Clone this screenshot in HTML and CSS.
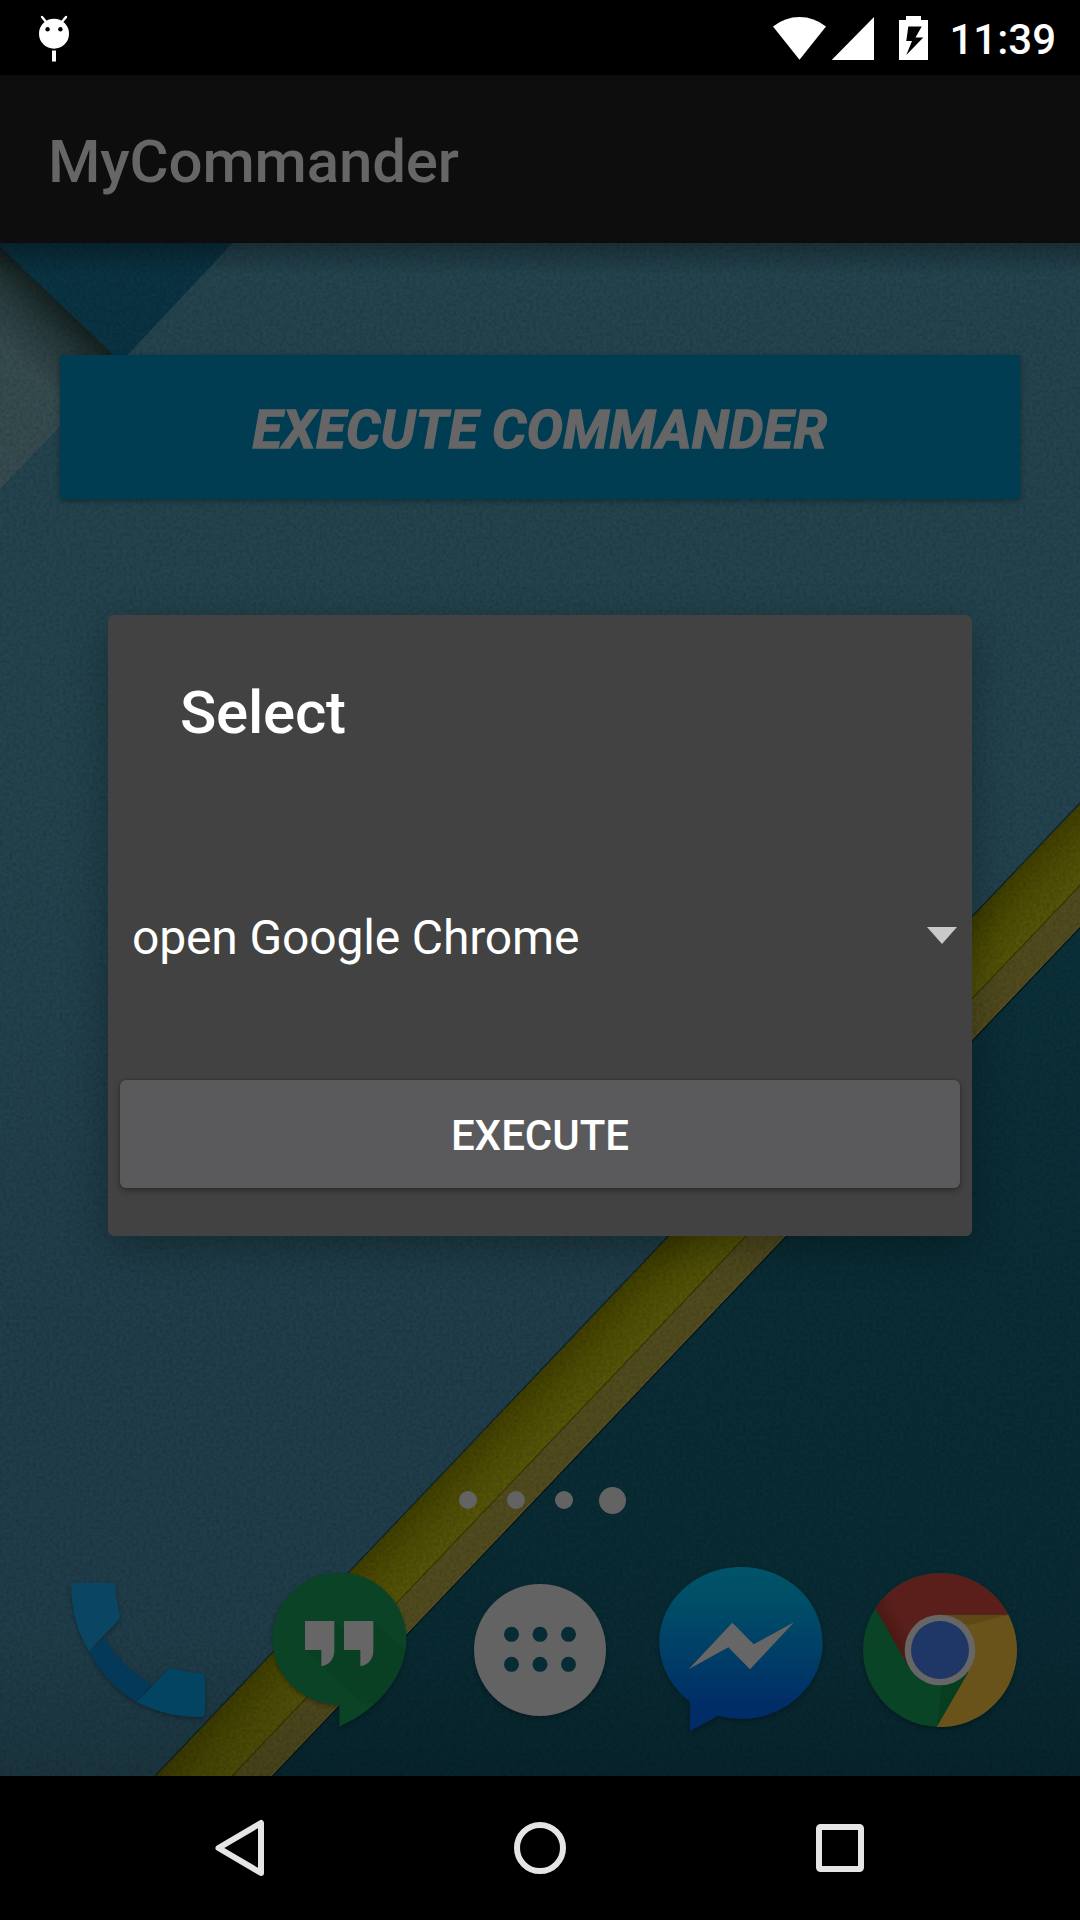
FILE: index.html
```html
<!DOCTYPE html>
<html lang="en">
<head>
<meta charset="utf-8">
<title>MyCommander</title>
<link rel="stylesheet" href="styles.css">
</head>
<body>
<div class="screen">
  <header class="status-bar">
    <svg class="status-debug" width="34" height="50" viewBox="37 13 34 50">
      <path d="M42 17l5 6M66 17l-5 6" stroke="#fff" stroke-width="2.4" stroke-linecap="round"/>
      <circle cx="54" cy="33.7" r="15" fill="#fff"/>
      <circle cx="47.6" cy="29.3" r="2.2"/>
      <circle cx="60.4" cy="29.3" r="2.2"/>
      <path d="M52 50.5h4v11h-4z" fill="#fff"/>
    </svg>
    <div class="status-right">
      <svg width="101" height="46" viewBox="773 14 101 46" fill="#fff">
        <path d="M773 25.5Q785 16 799.5 16T826 25.5L799.5 58.7z"/>
        <path d="M874 16v43h-42.3z"/>
      </svg>
      <svg width="29" height="46" viewBox="899 14 29 46">
        <path d="M906 15h15v4h7v40h-29V19h7z" fill="#fff"/>
        <path d="M921.7 25.5h-13.4l-2 14.5h5.7l-5.7 14 17-17.5h-7.8z"/>
      </svg>
      <span class="clock">11:39</span>
    </div>
  </header>

  <div class="app-bar"><h1 class="app-title">MyCommander</h1></div>

  <main class="home">
    <svg class="wallpaper" viewBox="0 243 1080 1533" width="1080" height="1533">
      <defs>
        <linearGradient id="light" x1="0" y1="243" x2="0" y2="1776" gradientUnits="userSpaceOnUse">
          <stop offset="0" stop-color="#24444f"/><stop offset=".35" stop-color="#23444f"/><stop offset=".7" stop-color="#203e4b"/><stop offset="1" stop-color="#1f3d49"/>
        </linearGradient>
        <linearGradient id="deep" x1="0" y1="930" x2="0" y2="1776" gradientUnits="userSpaceOnUse">
          <stop offset="0" stop-color="#0b303a"/><stop offset="1" stop-color="#082932"/>
        </linearGradient>
        <linearGradient id="band" x1="618" y1="1290" x2="658" y2="1328" gradientUnits="userSpaceOnUse">
          <stop offset="0" stop-color="#403f00"/><stop offset=".5" stop-color="#4e4d04"/><stop offset="1" stop-color="#565509"/>
        </linearGradient>
        <linearGradient id="cream" x1="58" y1="302" x2="10" y2="352" gradientUnits="userSpaceOnUse">
          <stop offset="0" stop-color="#142220"/><stop offset=".4" stop-color="#26383a"/><stop offset="1" stop-color="#364c50"/>
        </linearGradient>
        <linearGradient id="top" x1="0" y1="243" x2="0" y2="275" gradientUnits="userSpaceOnUse">
          <stop offset="0" stop-color="#000" stop-opacity=".3"/><stop offset="1" stop-color="#000" stop-opacity="0"/>
        </linearGradient>
        <linearGradient id="bottom" x1="0" y1="1640" x2="0" y2="1776" gradientUnits="userSpaceOnUse">
          <stop offset="0" stop-color="#000" stop-opacity="0"/><stop offset="1" stop-color="#000" stop-opacity=".14"/>
        </linearGradient>
        <filter id="grain" x="0" y="0" width="100%" height="100%">
          <feTurbulence type="fractalNoise" baseFrequency=".3" numOctaves="2" seed="4"/>
          <feColorMatrix values="0 0 0 0 0  0 0 0 0 0  0 0 0 0 0  .28 0 0 0 -.09"/>
        </filter>
      </defs>
      <path fill="url(#light)" d="M0 243h1080v1533H0z"/>
      <path fill="url(#cream)" d="M0 243v246L121 362z"/>
      <path fill="#0a3343" d="M-4 243h236.5L121 362z"/>
      <path fill="url(#deep)" d="M1080 926.7V1776H271.7z"/>
      <path fill="#514c1e" d="M1080 885.3v41.4L271.7 1776H232z"/>
      <path fill="url(#band)" d="M1080 803v82.3L232 1776h-77z"/>
      <path d="M1080 803L155 1776" stroke="#102329" stroke-width="1.3"/>
      <path d="M1080 885.3L232 1776" stroke="#393800" stroke-width="1.2"/>
      <path d="M1080 926L271 1776" stroke="#665725" stroke-width="1"/>
      <path d="M1080 927.7L272.7 1776" stroke="#051820" stroke-width="1.3"/>
      <path fill="url(#top)" d="M0 243h1080v32H0z"/>
      <path fill="url(#bottom)" d="M0 1640h1080v136H0z"/>
      <path filter="url(#grain)" d="M0 243h1080v1533H0z"/>
    </svg>

    <button class="commander-button">EXECUTE COMMANDER</button>

    <section class="dialog">
      <h2 class="dialog-title">Select</h2>
      <div class="spinner">
        <span>open Google Chrome</span>
        <svg width="30" height="17" viewBox="0 0 30 17"><path d="M0 0h30L15 17z" fill="#c9c9c9"/></svg>
      </div>
      <button class="dialog-button">EXECUTE</button>
    </section>

    <div class="pages"><i></i><i></i><i></i><i class="current"></i></div>

    <nav class="dock">
      <svg viewBox="0 0 600 600">
        <path fill="#05395a" d="M147 334L195 293Q243 385 335 431L290 486Q200 436 147 334z"/>
        <path fill="#0a4664" d="M106 128H213Q226 128 227 142Q229 190 240 225Q242 233 236 240L147 334Q94 246 94 142Q94 128 106 128z"/>
        <path fill="#034463" d="M290 486L383 389Q389 383 398 385Q438 397 484 399Q495 400 495 411V519Q495 530 484 531Q382 533 290 486z"/>
      </svg>
      <svg viewBox="600 0 600 600">
        <path fill="#0a4325" d="M898 98A200.500 198 0 0 0 697 296A200.500 198 0 0 0 898 494V560C1010 512 1099 410 1099 298A201 200 0 0 0 898 98z"/>
        <path fill="#083c20" d="M883 243L912 272V243H1000L1098 330Q1086 410 1008 489L970 492 795 330 883 290z" opacity=".4"/>
        <path fill="#666" d="M795 243H883V330Q883 370 844 379V330H795zM912 243H1000V330Q1000 370 961 379V330H912z"/>
      </svg>
      <svg viewBox="120 240 600 600">
        <circle cx="420" cy="570" r="198" fill="#636363"/>
        <g fill="#082c36">
          <circle cx="334.500" cy="523" r="22.500"/><circle cx="420" cy="523" r="22.500"/><circle cx="505.500" cy="523" r="22.500"/>
          <circle cx="334.500" cy="613" r="22.500"/><circle cx="420" cy="613" r="22.500"/><circle cx="505.500" cy="613" r="22.500"/>
        </g>
      </svg>
      <svg viewBox="0 0 600 600">
        <defs><linearGradient id="msg" x1="0" y1="0" x2="0" y2="1"><stop offset="0" stop-color="#005468"/><stop offset=".15" stop-color="#005068"/><stop offset=".5" stop-color="#004067"/><stop offset=".85" stop-color="#002d67"/><stop offset="1" stop-color="#002b67"/></linearGradient></defs>
        <path fill="url(#msg)" d="M303 81C168 81 58 182 58 308C58 378 94 441 150 485V573L235 527Q268 537 303 537C438 537 548 434 548 308S438 81 303 81z"/>
        <path fill="#666" d="M146 388L277 248 341 313 462 247 330 388 265 322z"/>
      </svg>
      <svg viewBox="600 0 600 600">
        <defs><linearGradient id="redshade" x1="750" y1="290" x2="800" y2="262" gradientUnits="userSpaceOnUse"><stop offset="0" stop-color="#4a1814"/><stop offset="1" stop-color="#5a1f1a"/></linearGradient></defs>
        <circle cx="900" cy="330" r="231" fill="#084425"/>
        <path fill="#69531b" d="M900 224H1105A231 231 0 0 1 890 561L985 396z"/>
        <path fill="#5f4717" d="M900 224H1105L985 255z"/>
        <path fill="#063a1e" d="M905 434L985 396 890 561z" opacity=".6"/>
        <path fill="url(#redshade)" d="M706 205A231 231 0 0 1 1105 224H900L800 370z"/>
        <circle cx="900" cy="330" r="106" fill="#666"/>
        <circle cx="900" cy="330" r="87" fill="#1f3766"/>
      </svg>
    </nav>
  </main>

  <footer class="nav-bar">
    <svg viewBox="0 0 60 60"><path d="M8.500 30L51 5v50z"/></svg>
    <svg viewBox="0 0 60 60"><circle cx="30" cy="30" r="23"/></svg>
    <svg viewBox="0 0 60 60"><rect x="9" y="9" width="42" height="42" rx="1.500"/></svg>
  </footer>
</div>
</body>
</html>
```
FILE: styles.css
```css
* { box-sizing: border-box; }
body { margin: 0; background: #000; font-family: Roboto, sans-serif; }
h1, h2 { margin: 0; font-weight: 500; }
button { display: block; border: 0; font-family: inherit; text-align: center; }
svg { display: block; flex: none; }

.screen { width: 1080px; height: 1920px; display: flex; flex-direction: column; overflow: hidden; }

.status-bar { height: 75px; display: flex; justify-content: space-between; align-items: center; padding: 0 24px 0 37px; background: #000; }
.status-right { display: flex; align-items: center; }
.status-right svg + svg { margin-left: 25px; }
.clock { margin-left: 21px; padding-top: 4px; color: #fff; font-size: 42px; font-weight: 500; line-height: 50px; }

.app-bar { height: 168px; display: flex; align-items: center; padding: 5px 48px 0; background: #0d0d0d; }
.app-title { color: #666; font-size: 60px; line-height: 72px; letter-spacing: -.15px; }

.home { position: relative; height: 1533px; display: flex; flex-direction: column; align-items: center; padding-top: 112px; }
.wallpaper { position: absolute; inset: 0; }
.home > :not(.wallpaper) { position: relative; }

.commander-button { width: 960px; height: 144px; padding: 5px 0 0; background: #003c52; color: #666; font-size: 54px; font-weight: 700; font-style: italic; letter-spacing: .4px; -webkit-text-stroke: 1.4px #666; box-shadow: 0 2px 6px rgba(0, 0, 0, .35); }

.dialog { width: 864px; height: 621px; margin-top: 116px; padding: 0 12px; border-radius: 6px; background: #424242; box-shadow: 0 12px 42px rgba(0, 0, 0, .3); }
.dialog-title { padding-left: 60px; color: #fff; font-size: 60px; line-height: 195px; letter-spacing: -.25px; }
.spinner { height: 255px; display: flex; align-items: center; justify-content: space-between; padding: 0 3px 0 12px; color: #fff; font-size: 48px; line-height: 60px; letter-spacing: -.15px; }
.spinner svg { margin-bottom: 4px; }
.dialog-button { width: 840px; height: 108px; margin-top: 15px; padding: 3px 0 0; border-radius: 6px; background: #5a5a5c; color: #fff; font-size: 42px; font-weight: 500; box-shadow: 0 3px 6px rgba(0, 0, 0, .3), 0 0 2px rgba(0, 0, 0, .3); }

.pages { height: 27px; width: 192px; margin: 250.5px 0 0; display: grid; grid-template-columns: repeat(4, 48px); place-items: center; }
.pages i { width: 18px; height: 18px; border-radius: 50%; background: #636363; }
.pages .current { width: 27px; height: 27px; }

.dock { width: 1000px; margin-top: 26.5px; display: grid; grid-template-columns: repeat(5, 200px); }
.dock svg { width: 200px; height: 200px; overflow: visible; filter: drop-shadow(0 2px 2px rgba(0, 0, 0, .3)); }

.nav-bar { height: 144px; display: flex; justify-content: center; align-items: center; gap: 240px; background: #000; }
.nav-bar svg { width: 60px; height: 60px; fill: none; stroke: #e5e5e5; stroke-width: 6; stroke-linejoin: round; }
```
